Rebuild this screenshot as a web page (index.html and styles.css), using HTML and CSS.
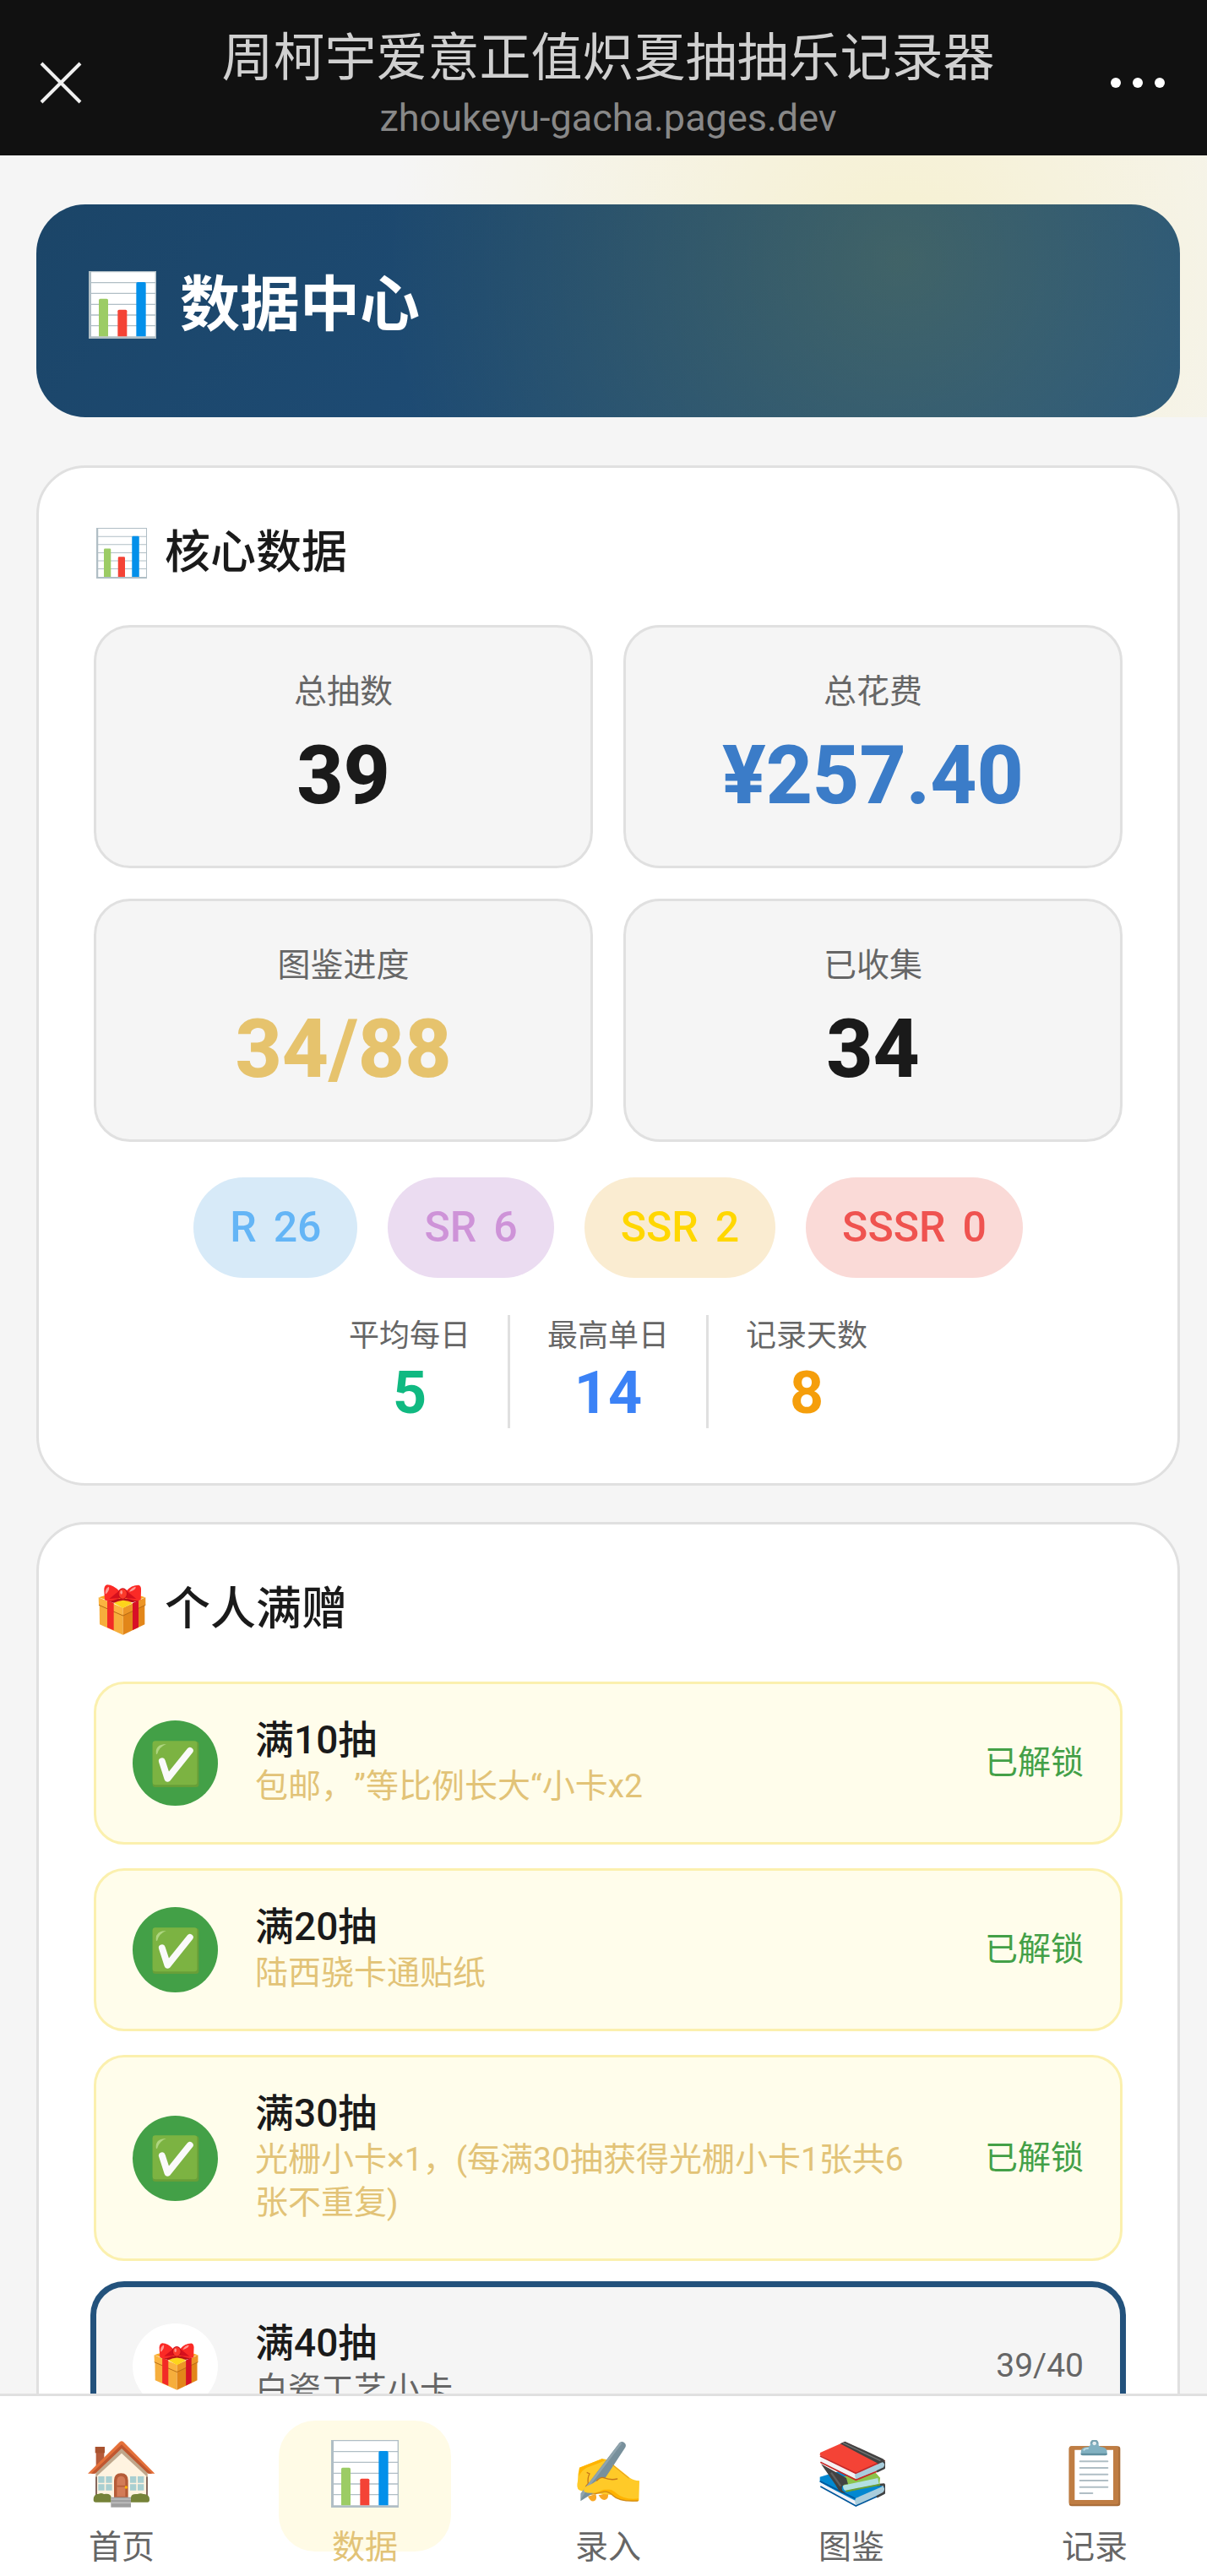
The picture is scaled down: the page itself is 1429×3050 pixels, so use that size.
FILE: index.html
```html
<!DOCTYPE html>
<html lang="zh-CN">
<head>
<meta charset="UTF-8" />
<title>周柯宇爱意正值炽夏抽抽乐记录器</title>
<meta name="viewport" content="width=device-width, initial-scale=1.0" />
<link rel="stylesheet" href="styles.css">
</head>
<body>
<svg class="sprite" aria-hidden="true">
    <symbol id="icon-close" viewBox="0 0 50 50">
        <path d="M2 2L48 48M48 2L2 48" fill="none" stroke="#f0f0f0" stroke-width="4" />
    </symbol>
    <symbol id="icon-more" viewBox="0 0 66 14">
        <circle cx="7" cy="7" r="6" fill="#fff" /><circle cx="33" cy="7" r="6" fill="#fff" /><circle cx="59" cy="7" r="6" fill="#fff" />
    </symbol>
    <symbol id="icon-chart" viewBox="0 0 240 240">
        <rect width="240" height="240" fill="#b0bec5" />
        <path d="M9 4H236V232H9z" fill="#fff" />
        <path d="M6 41H238M6 79H238M6 118H238M6 156H238M6 194H238" stroke="#b0bec5" stroke-width="4" />
        <path d="M36 232V103q0-5 5-5H64q5 0 5 5V232z" fill="#9ccc65" />
        <path d="M103 232V142q0-5 5-5H131q5 0 5 5V232z" fill="#f44336" />
        <path d="M169 232V44q0-5 5-5H198q5 0 5 5V232z" fill="#0390ea" />
    </symbol>
    <symbol id="icon-home" viewBox="72 150 240 240">
        <path d="M101 195H130V232L101 260z" fill="#b55b3a" />
        <path d="M98 174H132V196H98z" fill="#a9522f" />
        <path d="M100 262L192 176L284 262V352H100z" fill="#fff3e0" />
        <path d="M102 280V352M282 280V352" stroke="#6d4c41" stroke-width="5" />
        <path d="M100 282V264L192 177L284 264V282L192 197z" fill="#bfa78c" />
        <path d="M72 269L186 156Q192 151 198 156L310 269H289L192 178L95 269z" fill="#e57039" />
        <path d="M84 269L192 166L300 269H286L192 180L98 269z" fill="#bf5730" />
        <path d="M109 279H131V302H109zM136 279H158V302H136zM109 307H131V329H109zM136 307H158V329H136zM222 279H244V302H222zM249 279H271V302H249zM222 307H244V329H222zM249 307H271V329H249z" fill="#a9cfd1" />
        <path d="M165 354V294Q165 268 190 268Q215 268 215 294V354z" fill="#b55b38" />
        <path d="M175 350V296Q175 278 190 278Q205 278 205 296V350z" fill="#d37b58" />
        <path d="M175 314H205" stroke="#b55b38" stroke-width="5" />
        <circle cx="208" cy="318" r="5" fill="#ffb300" />
        <path d="M92 362Q92 341 111 341Q120 337 129 342Q155 338 155 355V371H100Q92 371 92 362zM225 355Q225 340 248 342Q260 337 269 342Q291 341 291 362Q291 371 283 371H225z" fill="#758238" />
        <path d="M154 353H225V389H154z" fill="#9e9e9e" />
        <path d="M154 360H225M154 373H225" stroke="#bdbdbd" stroke-width="5" />
    </symbol>
    <symbol id="icon-write" viewBox="30 30 240 240">
        <path d="M78 230Q88 252 102 246Q112 240 106 222zM116 226Q128 248 143 241Q152 236 150 218z" fill="#f9a825" />
        <path d="M47 208Q36 200 42 176Q42 148 48 128L128 97Q152 96 172 120L228 165Q240 174 261 175L259 246Q190 252 170 226L70 216z" fill="#ffca28" />
        <path d="M48 128L128 97L140 101L120 111L74 128Q54 138 46 160zM66 214Q82 228 134 214Q150 211 168 228Q190 250 258 246L258 238Q208 244 180 220Q160 200 132 205Q84 214 66 204z" fill="#ffb300" />
        <path d="M74 145L84 150Q76 164 79 184L70 196" fill="none" stroke="#c77718" stroke-width="4" />
        <path d="M66 222Q92 226 134 214Q150 211 168 228Q190 250 256 246" fill="none" stroke="#d08a18" stroke-width="4" />
        <path d="M190 40Q201 31 210 42Q216 50 209 59L110 210L52 247L53 220z" fill="#78909c" />
        <path d="M190 42Q195 36 199 42L76 205L54 239L53 220z" fill="#90a4ae" />
        <path d="M65 214Q59 201 76 193Q96 186 126 162Q136 164 157 170L182 168L190 205L134 206Q92 226 65 214z" fill="#ffca28" />
        <path d="M110 174Q124 160 134 164Q160 174 182 168" fill="none" stroke="#c77718" stroke-width="4" stroke-linecap="round" />
        <path d="M166 119L224 166" stroke="#e69a1a" stroke-width="3" />
    </symbol>
    <symbol id="icon-books" viewBox="30 30 240 240">
        <path d="M38 161L113 139L272 198L165 252L38 179z" fill="#0288d1" />
        <path d="M40 182L165 246V264L45 198Q35 190 40 182z" fill="#f2f2f8" />
        <path d="M166 236L262 194Q274 206 264 220L168 264Q158 250 166 236z" fill="#a9cddc" />
        <path d="M38 176L163 238M40 195L166 264L266 219Q278 204 265 192" fill="none" stroke="#01579b" stroke-width="5" />
        <path d="M240 190L265 188Q278 205 265 219L240 232" fill="none" stroke="#424242" stroke-width="8" />
        <path d="M124 160L234 144L252 164L250 186L139 213L112 180z" fill="#8bc34a" />
        <path d="M120 191L244 165L248 187L132 210Q120 210 120 191z" fill="#b2e0e2" />
        <path d="M130 212L252 188" stroke="#689f38" stroke-width="6" />
        <path d="M42 115L132 165L138 187Q110 186 118 210L130 218L114 217Q102 208 94 190z" fill="#424242" />
        <path d="M78 146L112 194" stroke="#616161" stroke-width="7" />
        <path d="M39 75L127 36L272 104L168 150L38 84z" fill="#f44336" />
        <path d="M110 43L127 35L262 97L270 104L246 114z" fill="#424242" />
        <path d="M120 40L254 104" stroke="#757575" stroke-width="4" />
        <path d="M42 94L166 149V169L46 112Q36 103 42 94z" fill="#f5f1f4" />
        <path d="M166 145L262 106Q273 114 264 130L168 170Q158 158 166 145z" fill="#a9cddc" />
        <path d="M39 87L165 148L246 112M40 109L166 172L240 142" fill="none" stroke="#c62828" stroke-width="5" />
        <path d="M242 112L261 105Q278 113 266 130L240 142" fill="none" stroke="#424242" stroke-width="7" />
    </symbol>
    <symbol id="icon-board" viewBox="30 30 240 240">
        <rect x="59" y="52" width="182" height="213" rx="10" fill="#a96d38" />
        <rect x="59" y="52" width="176" height="207" rx="9" fill="#bf7d43" />
        <path d="M79 65H216V243H79z" fill="#fff" />
        <path d="M98 106H196M98 129H196M98 152H196M98 174H196M98 197H196M98 219H142" stroke="#b0bec5" stroke-width="6" stroke-linecap="round" />
        <circle cx="149" cy="43" r="11" fill="none" stroke="#78a3b2" stroke-width="8" />
        <path d="M101 83V74Q101 56 121 55Q135 54 136 43H162Q163 54 177 55Q194 57 194 74V83z" fill="#82b1c1" />
        <path d="M101 77H194V79Q194 85 188 85H107Q101 85 101 79z" fill="#5f8fa0" />
        <path d="M112 65Q116 59 126 60" fill="none" stroke="#b9d8e2" stroke-width="6" stroke-linecap="round" />
        <circle cx="149" cy="43" r="6" fill="#e4edf0" />
    </symbol>
    <symbol id="icon-gift" viewBox="72 46 180 180">
        <path d="M81 92L132 76H195L246 92L165 120z" fill="#f9a825" />
        <path d="M83 114L167 152V225L84 188z" fill="#f6ae3c" />
        <path d="M244 114L167 152V225L244 188z" fill="#e28619" />
        <path d="M80 92L167 129V157L81 118z" fill="#fbb440" />
        <path d="M247 92L167 129V157L247 118z" fill="#ec9526" />
        <path d="M81 119L167 157L247 119" fill="none" stroke="#b56a15" stroke-width="3" />
        <path d="M111 102L134 112V209L111 199z" fill="#f22a26" />
        <path d="M201 112L222 102V198L201 208z" fill="#d80f27" />
        <path d="M134 112L167 102L201 112L167 130z" fill="#fdd41b" />
        <path d="M112 104Q140 92 166 98Q196 92 223 104L200 110Q186 103 167 102Q150 103 134 111z" fill="#b80f18" />
        <path d="M154 70Q132 47 111 47Q98 50 100 70L102 101Q112 108 134 102L158 94zM178 70Q196 48 222 48Q233 51 231 70L230 101Q218 107 198 101L174 94z" fill="#fb2a26" />
        <path d="M154 68L118 97L156 94zM178 68L214 97L176 94z" fill="#d5101d" />
        <ellipse cx="166" cy="79" rx="17" ry="20" fill="#c90e1a" />
        <ellipse cx="166" cy="79" rx="14" ry="17" fill="#fb3a2a" />
        <path d="M104 78Q104 58 117 54Q120 66 107 80zM190 70Q196 58 212 54Q214 64 190 72z" fill="#ff9a94" />
        <ellipse cx="161" cy="74" rx="4" ry="7" fill="#ff9a94" />
    </symbol>
    <symbol id="icon-check" viewBox="267 594 170 170">
        <rect x="269" y="600" width="166" height="164" rx="10" fill="#689f38" />
        <rect x="269" y="598" width="160" height="158" rx="10" fill="#7cb342" />
        <path d="M282 646Q276 610 318 609Q292 620 286 644z" fill="#aed581" />
        <path d="M303 671L323 733L403 633" fill="none" stroke="#fafafa" stroke-width="24" stroke-linecap="round" stroke-linejoin="round" />
    </symbol>
</svg>

<div class="app">
    <header class="topbar">
        <button class="topbar-btn" aria-label="关闭"><svg class="icon-close"><use href="#icon-close" /></svg></button>
        <div class="topbar-text">
            <div class="topbar-title">周柯宇爱意正值炽夏抽抽乐记录器</div>
            <div class="topbar-url">zhoukeyu-gacha.pages.dev</div>
        </div>
        <button class="topbar-btn" aria-label="更多"><svg class="icon-more"><use href="#icon-more" /></svg></button>
    </header>

    <main class="content">
        <section class="hero-wrap">
            <div class="hero">
                <h1 class="hero-title"><svg class="icon-lg"><use href="#icon-chart" /></svg>数据中心</h1>
            </div>
        </section>

        <section class="card">
            <h2 class="card-title"><svg class="icon-md"><use href="#icon-chart" /></svg>核心数据</h2>
            <div class="stats-grid">
                <div class="stat-box">
                    <div class="stat-label">总抽数</div>
                    <div class="stat-value">39</div>
                </div>
                <div class="stat-box">
                    <div class="stat-label">总花费</div>
                    <div class="stat-value blue">¥257.40</div>
                </div>
                <div class="stat-box">
                    <div class="stat-label">图鉴进度</div>
                    <div class="stat-value gold">34/88</div>
                </div>
                <div class="stat-box">
                    <div class="stat-label">已收集</div>
                    <div class="stat-value">34</div>
                </div>
            </div>
            <div class="rarity-row">
                <span class="rarity r">R <b>26</b></span>
                <span class="rarity sr">SR <b>6</b></span>
                <span class="rarity ssr">SSR <b>2</b></span>
                <span class="rarity sssr">SSSR <b>0</b></span>
            </div>
            <div class="daily-row">
                <div class="daily">
                    <div class="daily-label">平均每日</div>
                    <div class="daily-value green">5</div>
                </div>
                <div class="daily">
                    <div class="daily-label">最高单日</div>
                    <div class="daily-value sky">14</div>
                </div>
                <div class="daily">
                    <div class="daily-label">记录天数</div>
                    <div class="daily-value orange">8</div>
                </div>
            </div>
        </section>

        <section class="card">
            <h2 class="card-title"><svg class="icon-md"><use href="#icon-gift" /></svg>个人满赠</h2>
            <ul class="gift-list">
                <li class="gift done">
                    <span class="gift-icon"><svg class="icon-sm"><use href="#icon-check" /></svg></span>
                    <div class="gift-info">
                        <div class="gift-name">满10抽</div>
                        <div class="gift-desc">包邮，”等比例长大“小卡x2</div>
                    </div>
                    <span class="gift-status">已解锁</span>
                </li>
                <li class="gift done">
                    <span class="gift-icon"><svg class="icon-sm"><use href="#icon-check" /></svg></span>
                    <div class="gift-info">
                        <div class="gift-name">满20抽</div>
                        <div class="gift-desc">陆西骁卡通贴纸</div>
                    </div>
                    <span class="gift-status">已解锁</span>
                </li>
                <li class="gift done">
                    <span class="gift-icon"><svg class="icon-sm"><use href="#icon-check" /></svg></span>
                    <div class="gift-info">
                        <div class="gift-name">满30抽</div>
                        <div class="gift-desc">光栅小卡×1，(每满30抽获得光棚小卡1张共6张不重复)</div>
                    </div>
                    <span class="gift-status">已解锁</span>
                </li>
                <li class="gift next">
                    <span class="gift-icon"><svg class="icon-sm"><use href="#icon-gift" /></svg></span>
                    <div class="gift-info">
                        <div class="gift-name">满40抽</div>
                        <div class="gift-desc">白瓷工艺小卡</div>
                    </div>
                    <span class="gift-status">39/40</span>
                </li>
            </ul>
        </section>
    </main>

    <nav class="tabbar">
        <a class="tab" href="#home"><svg class="icon-lg"><use href="#icon-home" /></svg><span>首页</span></a>
        <a class="tab active" href="#data"><svg class="icon-lg"><use href="#icon-chart" /></svg><span>数据</span></a>
        <a class="tab" href="#add"><svg class="icon-lg"><use href="#icon-write" /></svg><span>录入</span></a>
        <a class="tab" href="#book"><svg class="icon-lg"><use href="#icon-books" /></svg><span>图鉴</span></a>
        <a class="tab" href="#log"><svg class="icon-lg"><use href="#icon-board" /></svg><span>记录</span></a>
    </nav>
</div>
</body>
</html>
```
FILE: styles.css
```css
* {
    box-sizing: border-box;
    margin: 0;
    padding: 0;
}
body {
    background: #f5f5f5;
    color: #1a1a1a;
    font-family: Roboto, "Noto Sans CJK SC", sans-serif;
    text-spacing-trim: space-all;
    overflow: hidden;
}
.sprite {
    display: none;
}
.app {
    display: flex;
    flex-direction: column;
    height: 100vh;
    margin-right: -11px;
}

/* 顶部栏 */
.topbar {
    display: flex;
    flex: none;
    align-items: center;
    justify-content: space-between;
    height: 184px;
    padding: 12px 47px 0;
    background: #111;
}
.topbar-btn {
    display: flex;
    width: 92px;
    border: 0;
    background: none;
}
.topbar-btn:last-child {
    justify-content: center;
}
.icon-close {
    width: 50px;
    height: 50px;
}
.icon-more {
    width: 66px;
    height: 14px;
}
.topbar-text {
    padding-top: 4px;
    text-align: center;
}
.topbar-title {
    font-size: 61px;
    line-height: 74px;
    margin-bottom: 6px;
    color: #d0d0d0;
}
.topbar-url {
    font-size: 45px;
    line-height: 56px;
    color: #888;
}

/* 内容 */
.content {
    flex: 1;
    min-height: 0;
    overflow: hidden;
}
.hero-wrap {
    position: relative;
    overflow: hidden;
    padding: 58px 43px 0;
    margin-bottom: 57px;
}
.hero-wrap::after {
    content: "";
    position: absolute;
    inset: 0;
    background: radial-gradient(circle 610px at 74% 40%, rgba(255, 215, 0, 0.15), transparent);
    pointer-events: none;
}
.hero {
    height: 252px;
    padding: 66px 62px;
    border-radius: 58px;
    background: linear-gradient(135deg, #1b4568, #1d4a72 40%, #225482);
}
.hero-title {
    display: flex;
    align-items: center;
    gap: 28px;
    font-size: 71px;
    line-height: 106px;
    color: #fff;
}
.card {
    margin: 0 43px 43px;
    padding: 65px;
    border: 3px solid #e0e0e0;
    border-radius: 58px;
    background: #fff;
}
.card-title {
    display: flex;
    align-items: center;
    gap: 21px;
    margin-bottom: 49px;
    font-size: 54px;
    font-weight: 500;
    line-height: 72px;
}
.icon-lg {
    flex: none;
    width: 80px;
    height: 80px;
}
.icon-md {
    width: 60px;
    height: 60px;
    margin-left: 3px;
}
.icon-sm {
    width: 56px;
    height: 56px;
}

.stats-grid {
    display: grid;
    grid-template-columns: 1fr 1fr;
    gap: 36px;
    margin-bottom: 42px;
}
.stat-box {
    height: 288px;
    padding: 47px 40px 0;
    border: 3px solid #e0e0e0;
    border-radius: 43px;
    background: #f5f5f5;
    text-align: center;
}
.stat-label {
    font-size: 39px;
    line-height: 58px;
    color: #666;
}
.stat-value {
    font-size: 96px;
    font-weight: 800;
    line-height: 140px;
}
.blue { color: #3b7cc8; }
.gold { color: #e6c36d; }
.green { color: #10b981; }
.sky { color: #3b82f6; }
.orange { color: #f59e0b; }

.rarity-row {
    display: flex;
    justify-content: center;
    gap: 36px;
    margin-bottom: 44px;
}
.rarity {
    display: flex;
    gap: 20px;
    padding: 0 43px;
    border-radius: 60px;
    font-size: 50px;
    font-weight: 500;
    line-height: 119px;
}
.rarity b {
    font-weight: inherit;
}
.r { background: #d7eaf8; color: #64b5f6; }
.sr { background: #ebdcf1; color: #ce93d8; }
.ssr { background: #faecd1; color: #ffd700; }
.sssr { background: #fadad7; color: #ef5350; }

.daily-row {
    display: flex;
    justify-content: center;
}
.daily {
    height: 134px;
    padding: 0 44px;
    text-align: center;
}
.daily + .daily {
    border-left: 3px solid #e0e0e0;
}
.daily-label {
    font-size: 36px;
    line-height: 50px;
    color: #666;
}
.daily-value {
    font-size: 70px;
    font-weight: 700;
    line-height: 84px;
}

/* 满赠列表 */
.gift-list {
    display: flex;
    flex-direction: column;
    gap: 28px;
    list-style: none;
}
.gift {
    display: flex;
    align-items: center;
    gap: 44px;
    padding: 40px 43px;
    border: 3px solid #e0e0e0;
    border-radius: 36px;
    background: #f5f5f5;
}
.gift-icon {
    display: flex;
    flex: none;
    align-items: center;
    justify-content: center;
    width: 101px;
    height: 101px;
    border-radius: 50%;
    background: #fff;
}
.gift-info {
    flex: 1;
    padding-right: 18px;
}
.gift-name {
    margin-bottom: 4px;
    font-size: 46px;
    font-weight: 500;
    line-height: 52px;
}
.gift-desc {
    font-size: 39px;
    line-height: 51px;
    color: #666;
}
.gift-status {
    font-size: 39px;
    line-height: 51px;
    color: #666;
}
.done {
    border-color: #fbf0ae;
    background: #fffdeb;
}
.done .gift-icon {
    background: #43a047;
}
.done .gift-desc {
    color: #e2c377;
}
.done .gift-status {
    color: #43a047;
}
.next {
    border-color: #23527c;
    box-shadow: 0 0 0 4px #23527c;
}

/* 底部导航 */
.tabbar {
    display: grid;
    flex: none;
    grid-template-columns: repeat(5, 1fr);
    justify-items: center;
    height: 216px;
    padding-top: 29px;
    border-top: 3px solid #e0e0e0;
    background: #fff;
}
.tab {
    display: flex;
    flex-direction: column;
    align-items: center;
    width: 204px;
    height: 155px;
    padding-top: 23px;
    border-radius: 43px;
    color: #666;
    font-size: 39px;
    line-height: 52px;
    text-decoration: none;
}
.tab span {
    margin-top: 21px;
}
.tab.active {
    background: #fffbe6;
    color: #e2c377;
}
```
